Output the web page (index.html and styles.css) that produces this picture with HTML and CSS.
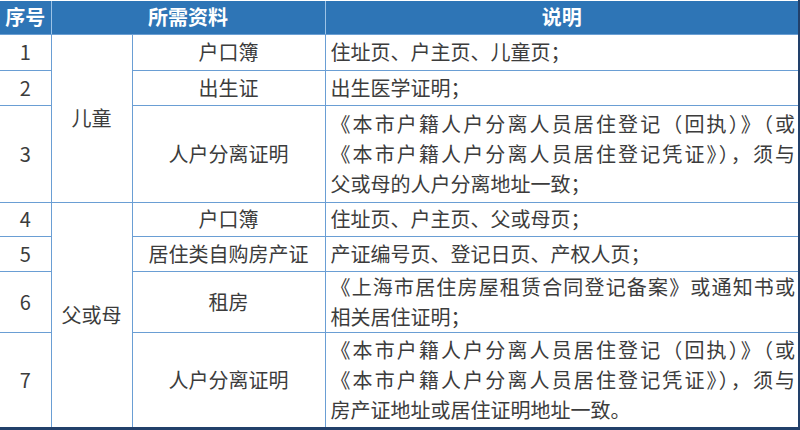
FILE: index.html
```html
<!DOCTYPE html>
<html lang="zh-CN">
<head>
<meta charset="utf-8">
<title>所需资料</title>
<link rel="stylesheet" href="styles.css">
</head>
<body>
<div class="frame">
<table class="docs">
  <colgroup>
    <col class="c-no">
    <col class="c-who">
    <col class="c-item">
    <col class="c-desc">
  </colgroup>
  <thead>
    <tr class="h-head">
      <th>序号</th>
      <th colspan="2">所需资料</th>
      <th>说明</th>
    </tr>
  </thead>
  <tbody>
    <tr class="h-r1">
      <td class="no">1</td>
      <td class="who" rowspan="3">儿童</td>
      <td class="item">户口簿</td>
      <td class="desc"><span class="ln">住址页、户主页、儿童页；</span></td>
    </tr>
    <tr class="h-r2">
      <td class="no">2</td>
      <td class="item">出生证</td>
      <td class="desc"><span class="ln">出生医学证明；</span></td>
    </tr>
    <tr class="h-r3">
      <td class="no">3</td>
      <td class="item">人户分离证明</td>
      <td class="desc"><span class="ln jl">《本市户籍人户分离人员居住登记（回执）》（或</span><span class="ln jl">《本市户籍人户分离人员居住登记凭证》），须与</span><span class="ln">父或母的人户分离地址一致；</span></td>
    </tr>
    <tr class="h-r4">
      <td class="no">4</td>
      <td class="who" rowspan="4">父或母</td>
      <td class="item">户口簿</td>
      <td class="desc"><span class="ln">住址页、户主页、父或母页；</span></td>
    </tr>
    <tr class="h-r5">
      <td class="no">5</td>
      <td class="item">居住类自购房产证</td>
      <td class="desc"><span class="ln">产证编号页、登记日页、产权人页；</span></td>
    </tr>
    <tr class="h-r6">
      <td class="no">6</td>
      <td class="item">租房</td>
      <td class="desc"><span class="ln jl">《上海市居住房屋租赁合同登记备案》或通知书或</span><span class="ln">相关居住证明；</span></td>
    </tr>
    <tr class="h-r7">
      <td class="no">7</td>
      <td class="item">人户分离证明</td>
      <td class="desc"><span class="ln jl">《本市户籍人户分离人员居住登记（回执）》（或</span><span class="ln jl">《本市户籍人户分离人员居住登记凭证》），须与</span><span class="ln">房产证地址或居住证明地址一致。</span></td>
    </tr>
  </tbody>
</table>
</div>
</body>
</html>
```

FILE: styles.css
```css
html, body {
  margin: 0;
  padding: 0;
  background: #ffffff;
}

body {
  width: 800px;
  height: 430px;
  overflow: hidden;
  font-family: "Noto Sans CJK SC", "Noto Sans", sans-serif;
}

.frame {
  width: 800px;
  height: 430px;
  box-sizing: border-box;
  padding-top: 1px;
  border-right: 2px solid #22406a;
  border-bottom: 3px solid #22406a;
  overflow: hidden;
}

.docs {
  width: 798px;
  border-collapse: collapse;
  table-layout: fixed;
  color: #3c3c3c;
  font-size: 20px;
  line-height: 30px;
}

.c-no { width: 51px; }
.c-who { width: 81px; }
.c-item { width: 193px; }
.c-desc { width: 473px; }

.docs th {
  background: #2e75b6;
  color: #ffffff;
  font-weight: bold;
  font-size: 20px;
  padding: 0;
  text-align: center;
  border-left: 1px solid #9dc3e6;
  border-right: 1px solid #9dc3e6;
  border-bottom: 1px solid #6b9fd3;
}

.docs th:first-child { border-left: none; }
.docs th:last-child { border-right: none; }

.docs td {
  border: 1px solid #6a9ed4;
  padding: 0 4px;
  vertical-align: middle;
  text-align: center;
}

.docs tr td:first-child { border-left: none; }
.docs tr td:last-child { border-right: none; }
.docs tbody tr:last-child td { border-bottom: none; }
.docs td.who { border-bottom: none; }

.docs td.no { padding: 0; }

.docs td.desc {
  text-align: left;
  padding: 0 3px 0 5px;
}

.ln { display: block; }

.jl {
  text-align: justify;
  text-align-last: justify;
}

.h-head { height: 33px; }
.h-r1 { height: 36px; }
.h-r2 { height: 35px; }
.h-r3 { height: 97px; }
.h-r4 { height: 34px; }
.h-r5 { height: 35px; }
.h-r6 { height: 61px; }
.h-r7 { height: 95px; }
```
